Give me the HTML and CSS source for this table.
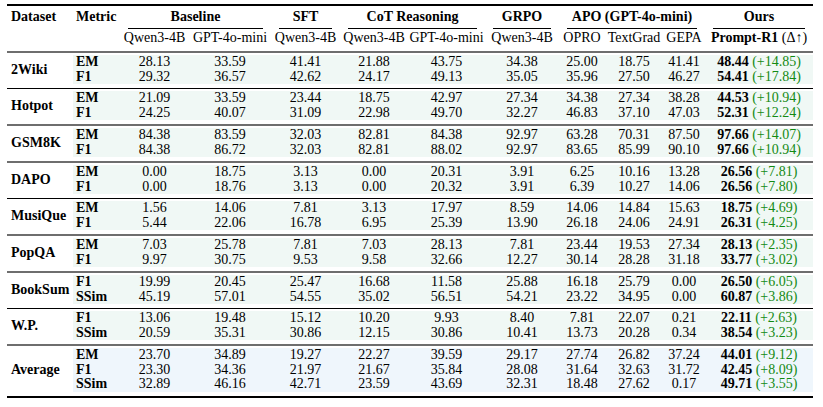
FILE: index.html
```html
<!DOCTYPE html>
<html>
<head>
<meta charset="utf-8">
<link rel="stylesheet" href="styles.css">
</head>
<body>
<div class="page">
  <div class="tbl">
    <div class="head">
      <div class="h1 ds-h">Dataset</div>
      <div class="h1 mt-h">Metric</div>
      <div class="grp span2"><div class="lbl">Baseline</div></div>
      <div class="grp"><div class="lbl">SFT</div></div>
      <div class="grp span2"><div class="lbl">CoT Reasoning</div></div>
      <div class="grp"><div class="lbl">GRPO</div></div>
      <div class="grp span3"><div class="lbl">APO (GPT-4o-mini)</div></div>
      <div class="grp"><div class="lbl">Ours</div></div>

      <div class="sub"></div>
      <div class="sub"></div>
      <div class="sub">Qwen3-4B</div>
      <div class="sub">GPT-4o-mini</div>
      <div class="sub">Qwen3-4B</div>
      <div class="sub">Qwen3-4B</div>
      <div class="sub">GPT-4o-mini</div>
      <div class="sub">Qwen3-4B</div>
      <div class="sub">OPRO</div>
      <div class="sub">TextGrad</div>
      <div class="sub">GEPA</div>
      <div class="sub"><b>Prompt-R1</b> (Δ↑)</div>
    </div>

    <div class="block rule-black">
      <div class="ds">2Wiki</div>
      <div class="rows green">
        <div class="row"><span class="m">EM</span><span>28.13</span><span>33.59</span><span>41.41</span><span>21.88</span><span>43.75</span><span>34.38</span><span>25.00</span><span>18.75</span><span>41.41</span><span><b>48.44</b> <i class="d">(+14.85)</i></span></div>
        <div class="row"><span class="m">F1</span><span>29.32</span><span>36.57</span><span>42.62</span><span>24.17</span><span>49.13</span><span>35.05</span><span>35.96</span><span>27.50</span><span>46.27</span><span><b>54.41</b> <i class="d">(+17.84)</i></span></div>
      </div>
    </div>

    <div class="block rule-gray">
      <div class="ds">Hotpot</div>
      <div class="rows green">
        <div class="row"><span class="m">EM</span><span>21.09</span><span>33.59</span><span>23.44</span><span>18.75</span><span>42.97</span><span>27.34</span><span>34.38</span><span>27.34</span><span>38.28</span><span><b>44.53</b> <i class="d">(+10.94)</i></span></div>
        <div class="row"><span class="m">F1</span><span>24.25</span><span>40.07</span><span>31.09</span><span>22.98</span><span>49.70</span><span>32.27</span><span>46.83</span><span>37.10</span><span>47.03</span><span><b>52.31</b> <i class="d">(+12.24)</i></span></div>
      </div>
    </div>

    <div class="block rule-gray">
      <div class="ds">GSM8K</div>
      <div class="rows green">
        <div class="row"><span class="m">EM</span><span>84.38</span><span>83.59</span><span>32.03</span><span>82.81</span><span>84.38</span><span>92.97</span><span>63.28</span><span>70.31</span><span>87.50</span><span><b>97.66</b> <i class="d">(+14.07)</i></span></div>
        <div class="row"><span class="m">F1</span><span>84.38</span><span>86.72</span><span>32.03</span><span>82.81</span><span>88.02</span><span>92.97</span><span>83.65</span><span>85.99</span><span>90.10</span><span><b>97.66</b> <i class="d">(+10.94)</i></span></div>
      </div>
    </div>

    <div class="block rule-black">
      <div class="ds">DAPO</div>
      <div class="rows green">
        <div class="row"><span class="m">EM</span><span>0.00</span><span>18.75</span><span>3.13</span><span>0.00</span><span>20.31</span><span>3.91</span><span>6.25</span><span>10.16</span><span>13.28</span><span><b>26.56</b> <i class="d">(+7.81)</i></span></div>
        <div class="row"><span class="m">F1</span><span>0.00</span><span>18.76</span><span>3.13</span><span>0.00</span><span>20.32</span><span>3.91</span><span>6.39</span><span>10.27</span><span>14.06</span><span><b>26.56</b> <i class="d">(+7.80)</i></span></div>
      </div>
    </div>

    <div class="block rule-gray">
      <div class="ds">MusiQue</div>
      <div class="rows green">
        <div class="row"><span class="m">EM</span><span>1.56</span><span>14.06</span><span>7.81</span><span>3.13</span><span>17.97</span><span>8.59</span><span>14.06</span><span>14.84</span><span>15.63</span><span><b>18.75</b> <i class="d">(+4.69)</i></span></div>
        <div class="row"><span class="m">F1</span><span>5.44</span><span>22.06</span><span>16.78</span><span>6.95</span><span>25.39</span><span>13.90</span><span>26.18</span><span>24.06</span><span>24.91</span><span><b>26.31</b> <i class="d">(+4.25)</i></span></div>
      </div>
    </div>

    <div class="block rule-gray">
      <div class="ds">PopQA</div>
      <div class="rows green">
        <div class="row"><span class="m">EM</span><span>7.03</span><span>25.78</span><span>7.81</span><span>7.03</span><span>28.13</span><span>7.81</span><span>23.44</span><span>19.53</span><span>27.34</span><span><b>28.13</b> <i class="d">(+2.35)</i></span></div>
        <div class="row"><span class="m">F1</span><span>9.97</span><span>30.75</span><span>9.53</span><span>9.58</span><span>32.66</span><span>12.27</span><span>30.14</span><span>28.28</span><span>31.18</span><span><b>33.77</b> <i class="d">(+3.02)</i></span></div>
      </div>
    </div>

    <div class="block rule-black">
      <div class="ds">BookSum</div>
      <div class="rows green">
        <div class="row"><span class="m">F1</span><span>19.99</span><span>20.45</span><span>25.47</span><span>16.68</span><span>11.58</span><span>25.88</span><span>16.18</span><span>25.79</span><span>0.00</span><span><b>26.50</b> <i class="d">(+6.05)</i></span></div>
        <div class="row"><span class="m">SSim</span><span>45.19</span><span>57.01</span><span>54.55</span><span>35.02</span><span>56.51</span><span>54.21</span><span>23.22</span><span>34.95</span><span>0.00</span><span><b>60.87</b> <i class="d">(+3.86)</i></span></div>
      </div>
    </div>

    <div class="block rule-gray">
      <div class="ds">W.P.</div>
      <div class="rows green">
        <div class="row"><span class="m">F1</span><span>13.06</span><span>19.48</span><span>15.12</span><span>10.20</span><span>9.93</span><span>8.40</span><span>7.81</span><span>22.07</span><span>0.21</span><span><b>22.11</b> <i class="d">(+2.63)</i></span></div>
        <div class="row"><span class="m">SSim</span><span>20.59</span><span>35.31</span><span>30.86</span><span>12.15</span><span>30.86</span><span>10.41</span><span>13.73</span><span>20.28</span><span>0.34</span><span><b>38.54</b> <i class="d">(+3.23)</i></span></div>
      </div>
    </div>

    <div class="block last">
      <div class="ds">Average</div>
      <div class="rows blue">
        <div class="row"><span class="m">EM</span><span>23.70</span><span>34.89</span><span>19.27</span><span>22.27</span><span>39.59</span><span>29.17</span><span>27.74</span><span>26.82</span><span>37.24</span><span><b>44.01</b> <i class="d">(+9.12)</i></span></div>
        <div class="row"><span class="m">F1</span><span>23.30</span><span>34.36</span><span>21.97</span><span>21.67</span><span>35.84</span><span>28.08</span><span>31.64</span><span>32.63</span><span>31.72</span><span><b>42.45</b> <i class="d">(+8.09)</i></span></div>
        <div class="row"><span class="m">SSim</span><span>32.89</span><span>46.16</span><span>42.71</span><span>23.59</span><span>43.69</span><span>32.31</span><span>18.48</span><span>27.62</span><span>0.17</span><span><b>49.71</b> <i class="d">(+3.55)</i></span></div>
      </div>
    </div>
  </div>
</div>
</body>
</html>
```

FILE: styles.css
```css
* { box-sizing: border-box; }

html, body {
  margin: 0;
  padding: 0;
  background: #ffffff;
}

body {
  font-family: "Liberation Serif", "Times New Roman", serif;
  font-size: 14px;
  color: #000000;
}

.page {
  padding: 4px 0 0 7px;
}

.tbl {
  width: 806px;
  border-top: 2px solid #000000;
  border-bottom: 2px solid #000000;
}

/* ---------- header ---------- */
.head {
  display: grid;
  grid-template-columns: 66px 47px 69px 82px 69px 68px 77px 74px 46px 58px 42px 108px;
  border-bottom: 2px solid #6e6e6e;
  line-height: 15px;
}

.h1 {
  font-weight: bold;
  padding-top: 3px;
  white-space: nowrap;
}

.ds-h { padding-left: 4px; }
.mt-h { padding-left: 3px; }

.grp {
  padding-top: 3px;
  font-weight: bold;
  text-align: center;
  white-space: nowrap;
}

.grp .lbl {
  margin: 0 8px;
  padding-bottom: 4px;
  border-bottom: 1px solid #000000;
}

.span2 { grid-column: span 2; }
.span3 { grid-column: span 3; }

.sub {
  padding: 1px 0 6px;
  text-align: center;
  white-space: nowrap;
}

/* ---------- body blocks ---------- */
.block {
  display: grid;
  grid-template-columns: 66px 740px;
  padding: 2px 0 4px;
}

.rule-black { border-bottom: 1px solid #000000; }
.rule-gray { border-bottom: 2px solid #6e6e6e; }

.ds {
  align-self: center;
  padding-left: 4px;
  font-weight: bold;
  line-height: 15px;
  white-space: nowrap;
}

.green { background: #f0f8f5; }
.blue { background: #eff6fc; }

.row {
  display: grid;
  grid-template-columns: 47px 69px 82px 69px 68px 77px 74px 46px 58px 42px 108px;
  line-height: 14.5px;
}

.row > span {
  text-align: center;
  white-space: nowrap;
}

.row > .m {
  text-align: left;
  padding-left: 3px;
  font-weight: bold;
}

.d {
  font-style: normal;
  color: #138a13;
}
```
